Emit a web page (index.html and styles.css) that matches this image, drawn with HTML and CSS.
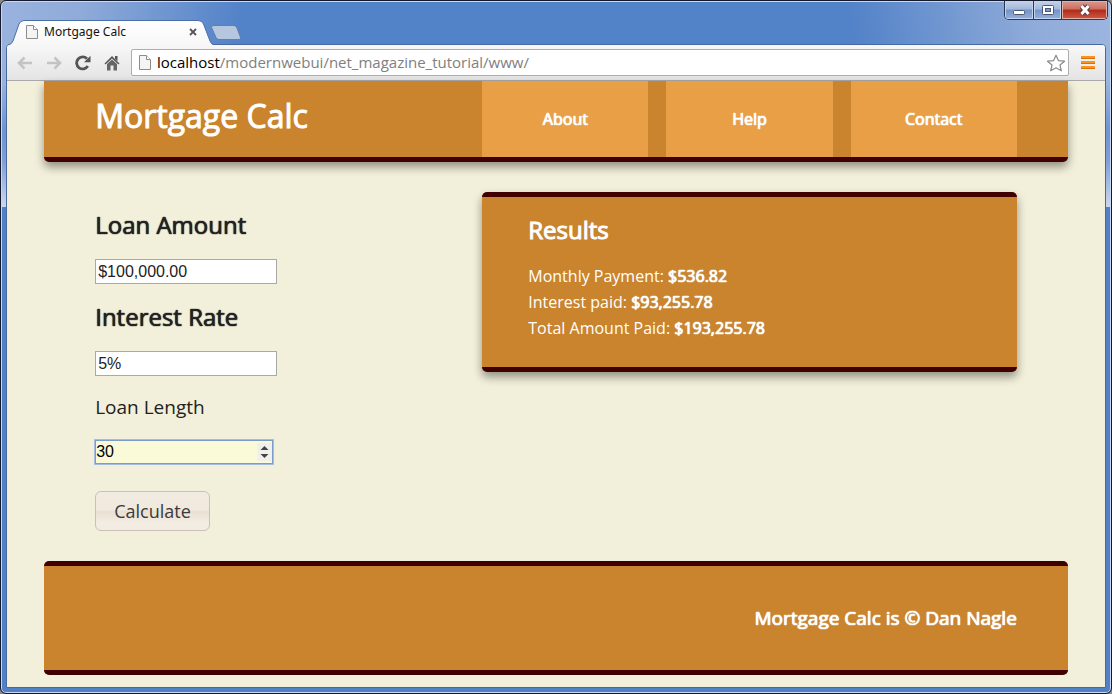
FILE: index.html
```html
<!DOCTYPE html>
<html lang="en">
<head>
<meta charset="utf-8">
<title>Mortgage Calc</title>
<link rel="stylesheet" href="styles.css">
</head>
<body>
<div class="window">
  <div class="titlebar">
    <div class="tab">
      <svg class="tab-shape" width="206" height="25" viewBox="0 0 206 25" aria-hidden="true">
        <defs><linearGradient id="tabfill" x1="0" y1="0" x2="0" y2="1"><stop offset="0" stop-color="#fff"/><stop offset="1" stop-color="#f7f7f7"/></linearGradient></defs>
        <path d="M0 25 Q4 24 5 21 L11 4 Q12.500 .5 16 .5 H190 Q194 .5 195.500 4 L202 21 Q203 24 206 25" fill="url(#tabfill)" stroke="#4a6fa8" stroke-width="1"/>
      </svg>
      <svg class="page-icon" width="12" height="14" viewBox="0 0 12 14" aria-hidden="true"><path d="M.5.5H7.500L11.500 4.500V13.500H.5Z" fill="#f4f4f4" stroke="#8c8c8c"/><path d="M7.500.5V4.500H11.500" fill="#fff" stroke="#8c8c8c"/></svg>
      <span class="tab-title">Mortgage Calc</span>
      <button class="tab-close" type="button" aria-label="Close tab"><svg width="8" height="8" viewBox="0 0 8 8"><path d="M1 1L7 7M7 1L1 7" stroke="#555" stroke-width="1.800"/></svg></button>
    </div>
    <button class="new-tab" type="button" aria-label="New tab"><svg width="32" height="16" viewBox="0 0 32 16"><path d="M4 .5H24Q26 .5 27 3L30.500 12.500Q31 14.500 29 14.500H9Q7 14.500 6 12.500L1.500 2.500Q1 .5 4 .5Z" fill="#b5c6de" stroke="#5d7fb4"/></svg></button>
    <div class="caption">
      <button class="cap cap-min" type="button" aria-label="Minimize"><svg width="14" height="12" viewBox="0 0 14 12"><rect x="1.500" y="6.500" width="11" height="4" rx="1" fill="#fff" stroke="#4b5874"/></svg></button>
      <button class="cap cap-max" type="button" aria-label="Maximize"><svg width="14" height="12" viewBox="0 0 14 12"><rect x="1.500" y="1.500" width="11" height="9" rx="1" fill="#fff" stroke="#4b5874"/><rect x="4.500" y="4.500" width="5" height="3" fill="#7f9bc9" stroke="#4b5874"/></svg></button>
      <button class="cap cap-close" type="button" aria-label="Close"><svg width="14" height="12" viewBox="0 0 14 12"><path d="M3.500 2L10.500 10M10.500 2L3.500 10" stroke="#5b3a48" stroke-width="5"/><path d="M3.500 2L10.500 10M10.500 2L3.500 10" stroke="#fff" stroke-width="3"/></svg></button>
    </div>
  </div>

  <div class="client">
    <div class="toolbar">
      <button class="tool" type="button" aria-label="Back"><svg width="16" height="14" viewBox="0 0 16 14"><path d="M7.500 1.500L2 7L7.500 12.500M2.500 7H15" fill="none" stroke="#c3c3c3" stroke-width="2.500"/></svg></button>
      <button class="tool" type="button" aria-label="Forward"><svg width="16" height="14" viewBox="0 0 16 14"><path d="M8.500 1.500L14 7L8.500 12.500M13.500 7H1" fill="none" stroke="#c3c3c3" stroke-width="2.500"/></svg></button>
      <button class="tool" type="button" aria-label="Reload"><svg width="16" height="16" viewBox="0 0 16 16"><path d="M12.800 11A6 6 0 1 1 12 3.800" fill="none" stroke="#555" stroke-width="2.800"/><path d="M15.500 .8V7.200H9Z" fill="#555"/></svg></button>
      <button class="tool" type="button" aria-label="Home"><svg width="16" height="16" viewBox="0 0 16 16"><path d="M.5 8.500L8 1L15.500 8.500L14.500 9.500L8 3.500L1.500 9.500Z" fill="#555"/><path d="M11 1H13.500V6L11 4Z" fill="#555"/><path d="M3 9L8 4.500L13 9V15.500H9.500V10.500H6.500V15.500H3Z" fill="#666"/></svg></button>
      <div class="omnibox">
        <svg class="page-icon" width="12" height="15" viewBox="0 0 12 15" aria-hidden="true"><path d="M.5.5H7.500L11.500 4.500V14.500H.5Z" fill="#f4f4f4" stroke="#8c8c8c"/><path d="M7.500.5V4.500H11.500" fill="#fff" stroke="#8c8c8c"/></svg>
        <div class="url" role="textbox" contenteditable="true" spellcheck="false" aria-label="Address"><span class="host">localhost</span>/modernwebui/net_magazine_tutorial/www/</div>
        <button class="star" type="button" aria-label="Bookmark"><svg width="20" height="18" viewBox="0 0 20 18"><path d="M10 1.200L12.500 6.700L18.500 7.200L14 11L15.300 16.800L10 13.800L4.700 16.800L6 11L1.500 7.200L7.500 6.700Z" fill="#fff" stroke="#8a8a8a" stroke-width="1.200" stroke-linejoin="round"/></svg></button>
      </div>
      <button class="menu" type="button" aria-label="Menu"><svg width="14" height="14" viewBox="0 0 14 14"><path d="M0 1.500H14M0 6.500H14M0 11.500H14" stroke="#f7941d" stroke-width="3"/><path d="M0 2.500H14M0 7.500H14M0 12.500H14" stroke="#d9700a" stroke-width="1"/></svg></button>
    </div>

    <div class="viewport">
      <header class="banner">
        <h1 class="brand">Mortgage Calc</h1>
        <nav class="nav">
          <a class="nav-link" href="#about">About</a>
          <a class="nav-link" href="#help">Help</a>
          <a class="nav-link" href="#contact">Contact</a>
        </nav>
      </header>

      <main class="content">
        <form class="loan">
          <label class="label" for="amount">Loan Amount</label>
          <input class="field" id="amount" type="text" value="$100,000.00">
          <label class="label" for="rate">Interest Rate</label>
          <input class="field" id="rate" type="text" value="5%">
          <label class="label label-small" for="years">Loan Length</label>
          <span class="stepper">
            <input class="field field-active" id="years" type="number" value="30">
            <svg class="spin" width="15" height="18" viewBox="0 0 15 18" aria-hidden="true"><rect width="15" height="18" fill="#f0f0ec"/><path d="M3.500 7L7.500 3L11.500 7ZM3.500 11L7.500 15L11.500 11Z" fill="#444"/></svg>
          </span>
          <button class="calculate" type="button">Calculate</button>
        </form>

        <section class="results">
          <h2 class="results-title">Results</h2>
          <p class="line">Monthly Payment: <b class="value">$536.82</b></p>
          <p class="line">Interest paid: <b class="value">$93,255.78</b></p>
          <p class="line">Total Amount Paid: <b class="value">$193,255.78</b></p>
        </section>
      </main>

      <footer class="footer">Mortgage Calc is © Dan Nagle</footer>
    </div>
  </div>
</div>
</body>
</html>
```
FILE: styles.css
```css
* { box-sizing: border-box; }

body {
  margin: 0;
  font-family: "Open Sans", sans-serif;
  font-size: 16px;
  color: #222;
  background: #8a8a8a;
}

button {
  margin: 0;
  padding: 0;
  border: 0;
  background: none;
  font: inherit;
}

svg { display: block; }

.window {
  display: flex;
  flex-direction: column;
  min-height: 100vh;
  padding: 0 5px 5px;
  border: 1px solid #14192b;
  border-radius: 6px;
  box-shadow: inset 0 0 0 1px #c9d9f2;
  background:
    linear-gradient(100deg, #9ab3de 0, #8fabd9 80px, transparent 240px) 0 0 / 100% 80px no-repeat,
    linear-gradient(260deg, #9db6e0 0, #8fabd9 80px, transparent 260px) 0 0 / 100% 80px no-repeat,
    linear-gradient(#5282c8, #5282c8) 0 0 / 100% 80px no-repeat,
    linear-gradient(#9ab3de 80px, #6f94d2 130px, #7f9fd6 160px, #cdd8ee 206px, #5080c6 206px);
}

.titlebar {
  display: flex;
  align-items: flex-end;
  height: 43px;
  padding-left: 2px;
}

.tab {
  position: relative;
  display: flex;
  align-items: center;
  width: 202px;
  height: 25px;
  padding: 0 13px 0 18px;
}

.tab-shape {
  position: absolute;
  left: 0;
  bottom: -1px;
}

.page-icon { position: relative; flex: none; }

.tab-title {
  position: relative;
  flex: 1;
  padding-left: 6px;
  font-family: "Noto Sans", sans-serif;
  font-size: 12px;
  color: #111;
}

.tab-close { position: relative; }

.new-tab { margin-bottom: 3px; }

.caption {
  display: flex;
  align-self: flex-start;
  margin-left: auto;
  margin-right: -2px;
  border: 1px solid #2b3850;
  border-top: 0;
  border-radius: 0 0 5px 5px;
  overflow: hidden;
}

.cap {
  display: grid;
  place-items: center;
  width: 28px;
  height: 18px;
  background: linear-gradient(#c3d2ea 0, #a3b8dc 45%, #7493c8 50%, #93b0dc 100%);
  box-shadow: inset 0 0 0 1px #c4d4ee;
}

.cap + .cap { border-left: 1px solid #2b3850; }

.cap-close {
  width: 46px;
  background: linear-gradient(#d99a8e 0, #cc6f60 45%, #b02a18 50%, #cf5a45 100%);
  box-shadow: inset 0 0 0 1px #e3b0a8;
}

.client {
  display: flex;
  flex: 1;
  flex-direction: column;
  border: 1px solid #47699f;
  border-radius: 4px 4px 0 0;
  background: #f2efda;
}

.toolbar {
  display: flex;
  align-items: center;
  height: 36px;
  padding: 0 10px;
  border-bottom: 1px solid #a8a8a8;
  border-radius: 3px 3px 0 0;
  background: linear-gradient(#f7f7f7, #e4e4e4);
}

.tool {
  display: grid;
  place-items: center;
  width: 16px;
  height: 16px;
  margin-right: 13px;
}

.omnibox {
  display: flex;
  flex: 1;
  align-items: center;
  height: 27px;
  margin-left: -2px;
  padding: 0 2px 0 7px;
  border: 1px solid #adadad;
  border-radius: 2px;
  background: #fff;
}

.url {
  flex: 1;
  padding-left: 6px;
  font-family: "Open Sans", sans-serif;
  font-size: 15px;
  line-height: 22px;
  padding-bottom: 2px;
  color: #808080;
  outline: none;
}

.host { color: #000; }

.menu { margin: 0 0 0 12px; }

.viewport {
  flex: 1;
  width: 100%;
  max-width: 1024px;
  margin: 0 auto;
  padding-bottom: 11px;
}

.banner {
  display: flex;
  justify-content: space-between;
  padding: 0 5%;
  border-bottom: 5px solid #400000;
  border-radius: 0 0 5px 5px;
  background: #c9842d;
  box-shadow: 0 5px 10px rgba(0, 0, 0, .4);
  color: #fff;
}

.brand {
  margin: 0;
  font-size: 32px;
  font-weight: 400;
  line-height: 70px;
  -webkit-text-stroke: 1px;
}

.nav {
  display: flex;
  gap: 18px;
  width: 58%;
}

.nav-link {
  flex: 1;
  font-size: 16px;
  line-height: 76px;
  text-align: center;
  text-decoration: none;
  color: #fff;
  text-shadow: 0 0 1px, 0 0 1px, 0 0 1px;
  background: #e99f46;
}

.content {
  display: flex;
  justify-content: space-between;
  align-items: flex-start;
  padding: 30px 5%;
}

.loan {
  display: flex;
  flex-direction: column;
  align-items: flex-start;
}

.label {
  margin: 15px 0 17px;
  font-size: 24px;
  line-height: 35px;
  text-shadow: 0 0 1px, 0 0 1px;
}

.label-small {
  font-size: 19px;
  line-height: 32px;
  text-shadow: none;
}

.field {
  width: 182px;
  height: 25px;
  padding: 0 2px;
  border: 1px solid #a9a9a9;
  background: #fff;
  font-family: "Liberation Sans", Arial, sans-serif;
  font-size: 16px;
  color: #222;
}

.stepper { position: relative; }

.field-active {
  display: block;
  width: 178px;
  height: 24px;
  padding: 0;
  border-color: #7d9ccb;
  outline: 1px solid #a3bde6;
  background: #fafad8;
  color: #000;
}

.field-active::-webkit-inner-spin-button { opacity: 0; }

.spin {
  position: absolute;
  top: 3px;
  right: 1px;
  pointer-events: none;
}

.calculate {
  margin-top: 27px;
  padding: 0 18px;
  border: 1px solid #c9c2b4;
  border-radius: 6px;
  background: linear-gradient(#f2ebe1 0, #f0e9de 48%, #eadfd2 50%, #f3ece2 80%, #f3ece2 100%);
  font-size: 18px;
  line-height: 38px;
  color: #3a3a3a;
}

.results {
  width: 58%;
  padding: 15px 46px 26px;
  border: solid #400000;
  border-width: 5px 0;
  border-radius: 5px;
  background: #c9842d;
  box-shadow: 0 5px 10px rgba(0, 0, 0, .4);
  color: #fff;
}

.results-title {
  margin: 0 0 15px;
  font-size: 24px;
  font-weight: 400;
  line-height: 36px;
  -webkit-text-stroke: 1px;
}

.line {
  margin: 0;
  line-height: 26px;
}

.value {
  font-weight: 400;
  text-shadow: 0 0 1px, 0 0 1px, 0 0 1px;
}

.footer {
  padding: 0 5%;
  border: solid #400000;
  border-width: 5px 0;
  border-radius: 5px;
  background: #c9842d;
  font-size: 19px;
  line-height: 104px;
  text-align: right;
  color: #fff;
  text-shadow: 0 0 1px, 0 0 1px, 0 0 1px;
}
```
